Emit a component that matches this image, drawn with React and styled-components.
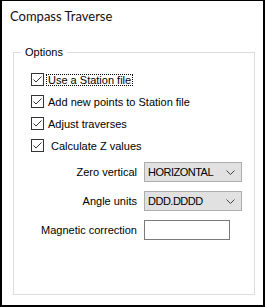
import styled, { createGlobalStyle } from 'styled-components';

const GlobalStyle = createGlobalStyle`
  html, body {
    margin: 0;
    padding: 0;
    background: #ffffff;
  }
  * {
    box-sizing: border-box;
  }
`;

const Window = styled.div`
  width: 265px;
  height: 307px;
  border: 2px solid #000;
  border-top-width: 1px;
  background: #fff;
  display: flex;
  flex-direction: column;
  font-family: "Liberation Sans", Arial, sans-serif;
  font-size: 11px;
  color: #000;
`;

const Title = styled.div`
  margin: 7px 0 0 8px;
  font-family: Lato, "Liberation Sans", sans-serif;
  font-size: 13px;
  line-height: 16px;
  color: #111;
`;

const Group = styled.fieldset`
  margin: 20px 0 0 11px;
  padding: 0;
  width: 242px;
  height: 251px;
  border: 1px solid #dcdcdc;
  min-width: 0;
`;

const Legend = styled.legend`
  margin-left: 7px;
  padding: 0 4px;
  font-size: 11px;
  line-height: 16px;
`;

const CheckList = styled.div`
  display: flex;
  flex-direction: column;
  gap: 9px;
  padding: 13px 0 0 17px;
`;

const CheckRow = styled.label`
  display: flex;
  align-items: center;
  height: 13px;
`;

const Box = styled.span`
  width: 13px;
  height: 13px;
  border: 1px solid #333;
  background: #fff;
  display: flex;
  align-items: center;
  justify-content: center;
  flex-shrink: 0;
`;

const CheckText = styled.span`
  margin-left: 2px;
  padding: 0 1px;
  line-height: 11px;
  height: 12px;
  border: 1px ${p => (p.$focused ? 'dotted #000' : 'solid transparent')};
  white-space: pre;
`;

const Fields = styled.div`
  display: grid;
  grid-template-columns: 123px auto;
  column-gap: 7px;
  row-gap: 9px;
  margin-top: 10px;
  align-items: center;
`;

const FieldLabel = styled.span`
  text-align: right;
  white-space: nowrap;
`;

const Select = styled.div`
  width: 98px;
  height: 20px;
  border: 1px solid #adadad;
  background: #e1e1e1;
  display: flex;
  align-items: center;
  justify-content: space-between;
  padding: 0 6px 0 3px;
`;

const SelectValue = styled.span`
  letter-spacing: -0.5px;
`;

const TextBox = styled.div`
  width: 86px;
  height: 20px;
  border: 1px solid #7a7a7a;
  background: #fff;
`;

const Check = () => (
  <svg width="11" height="11" viewBox="0 0 11 11">
    <path d="M1.5 5.5 L4 8 L9.5 2.5" fill="none" stroke="#333" strokeWidth="1" />
  </svg>
);

const Chevron = () => (
  <svg width="9" height="5" viewBox="0 0 9 5">
    <path d="M0.5 0.5 L4.5 4.5 L8.5 0.5" fill="none" stroke="#444" strokeWidth="1" />
  </svg>
);

const options = [
  { label: 'Use a Station file', focused: true },
  { label: 'Add new points to Station file' },
  { label: 'Adjust traverses' },
  { label: ' Calculate Z values' },
];

export default function App() {
  return (
    <>
      <GlobalStyle />
      <Window>
        <Title>Compass Traverse</Title>
        <Group>
          <Legend>Options</Legend>
          <CheckList>
            {options.map(o => (
              <CheckRow key={o.label}>
                <Box><Check /></Box>
                <CheckText $focused={o.focused}>{o.label}</CheckText>
              </CheckRow>
            ))}
          </CheckList>
          <Fields>
            <FieldLabel>Zero vertical</FieldLabel>
            <Select>
              <SelectValue>HORIZONTAL</SelectValue>
              <Chevron />
            </Select>
            <FieldLabel>Angle units</FieldLabel>
            <Select>
              <SelectValue>DDD.DDDD</SelectValue>
              <Chevron />
            </Select>
            <FieldLabel>Magnetic correction</FieldLabel>
            <TextBox />
          </Fields>
        </Group>
      </Window>
    </>
  );
}
